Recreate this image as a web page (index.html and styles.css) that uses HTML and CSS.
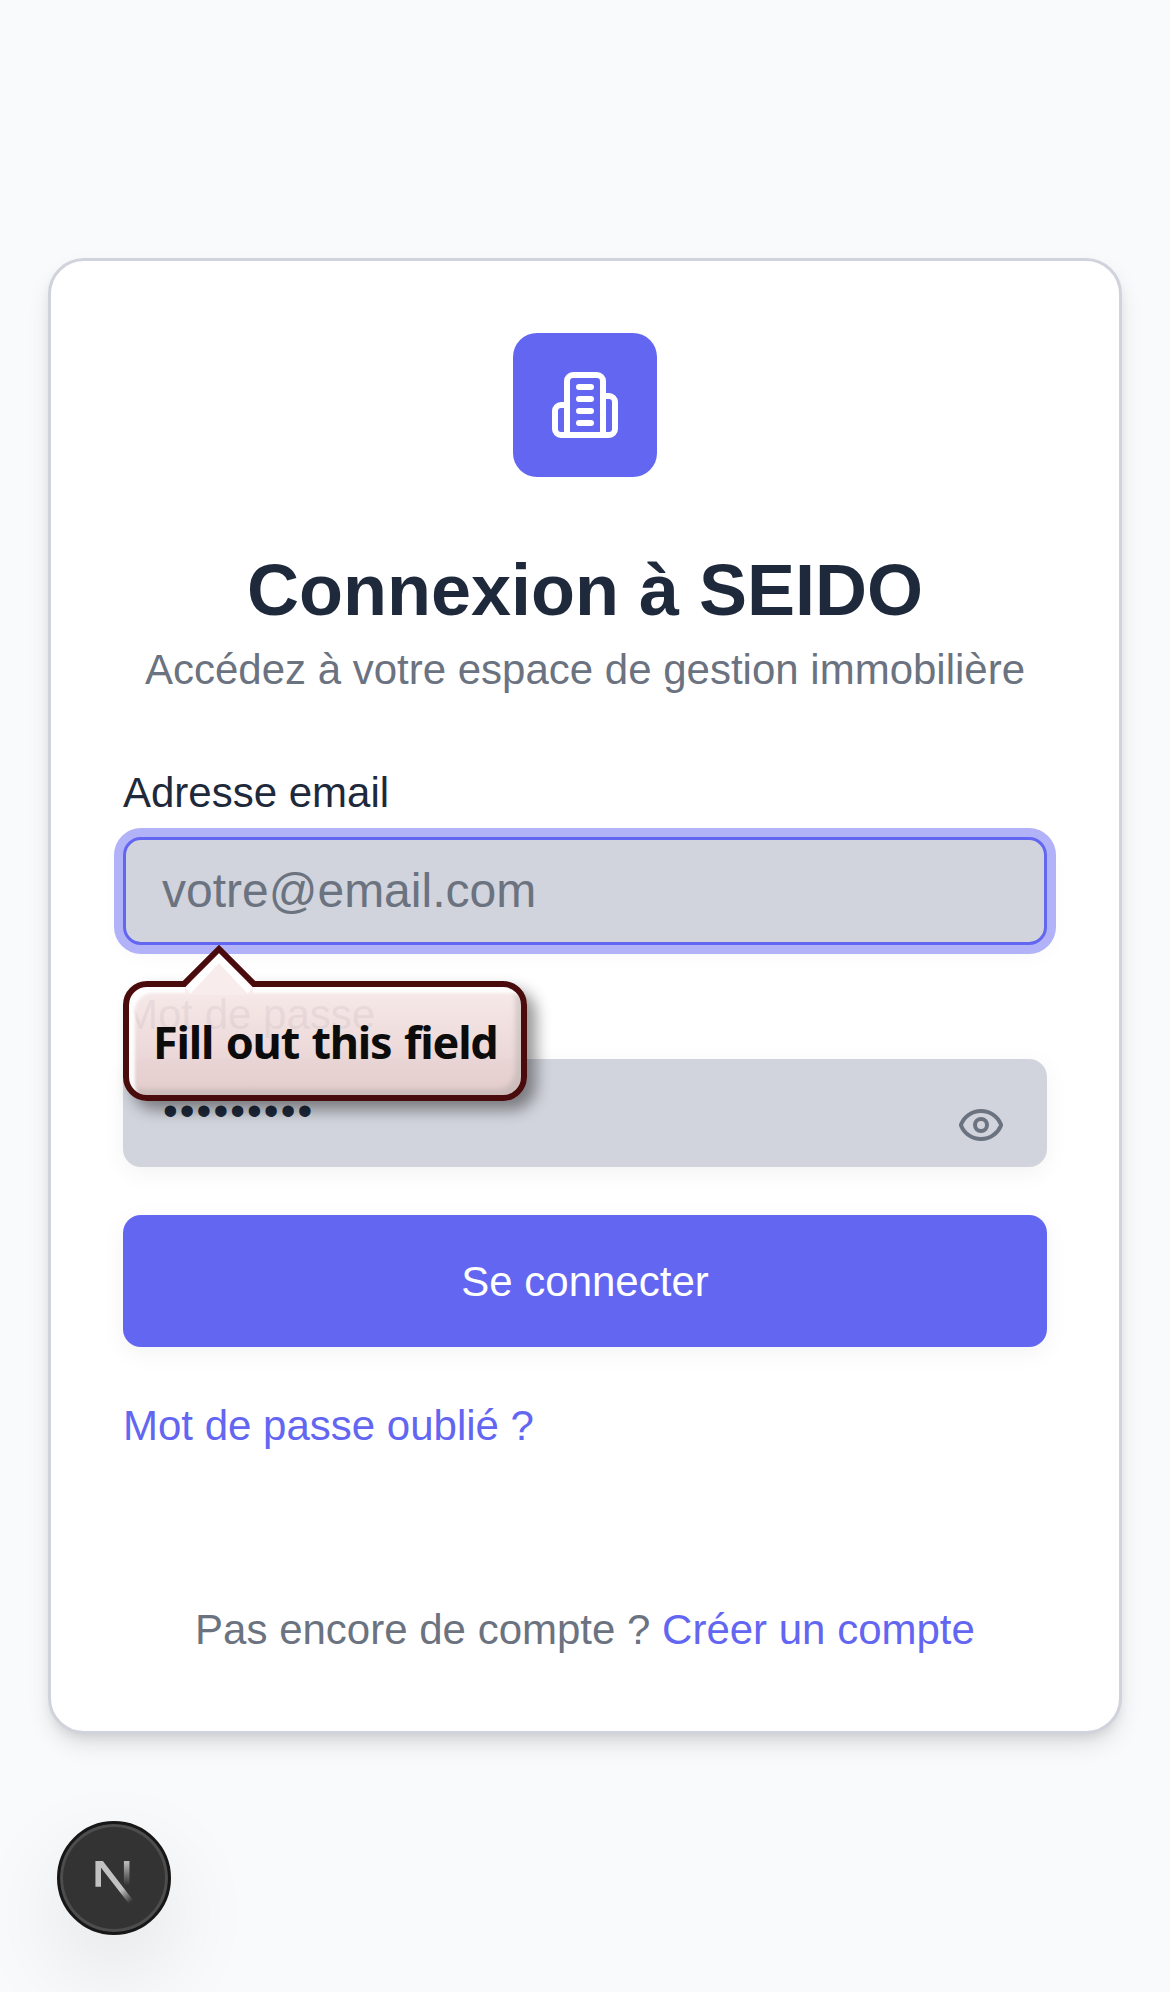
FILE: index.html
```html
<!DOCTYPE html>
<html lang="fr">
<head>
<meta charset="utf-8">
<title>Connexion à SEIDO</title>
<link rel="stylesheet" href="styles.css">
</head>
<body>
<main class="page">
  <section class="card">
    <header class="head">
      <div class="logo">
        <svg viewBox="0 0 24 24"><path d="M6 22V4a2 2 0 0 1 2-2h8a2 2 0 0 1 2 2v18Z"/><path d="M6 12H4a2 2 0 0 0-2 2v6a2 2 0 0 0 2 2h2"/><path d="M18 9h2a2 2 0 0 1 2 2v9a2 2 0 0 1-2 2h-2"/><path d="M10 6h4M10 10h4M10 14h4M10 18h4"/></svg>
      </div>
      <h1 class="title">Connexion à SEIDO</h1>
      <p class="subtitle">Accédez à votre espace de gestion immobilière</p>
    </header>
    <form class="form">
      <div class="field">
        <label class="label" for="email">Adresse email</label>
        <div class="control">
          <input class="input input-focused" id="email" type="text" placeholder="votre@email.com">
          <div class="tooltip">
            <svg class="tooltip-arrow" viewBox="0 0 76 50"><path class="arrow-fill" d="M4 42L38 6l34 36v8H4Z"/><path class="arrow-glow" d="M7 46L38 13l31 33"/><path class="arrow-line" d="M2 40L38 4l36 36"/></svg>
            <span class="tooltip-text">Fill out this field</span>
          </div>
        </div>
      </div>
      <div class="field">
        <label class="label" for="password">Mot de passe</label>
        <div class="control">
          <input class="input input-password" id="password" type="password" value="motdepass">
          <svg class="eye" viewBox="0 0 24 24"><path d="M2.062 12.348a1 1 0 0 1 0-.696 10.75 10.75 0 0 1 19.876 0 1 1 0 0 1 0 .696 10.75 10.75 0 0 1-19.876 0"/><circle cx="12" cy="12" r="3"/></svg>
        </div>
      </div>
      <button class="submit" type="button">Se connecter</button>
    </form>
    <a class="link forgot">Mot de passe oublié ?</a>
    <p class="signup">Pas encore de compte ? <a class="link">Créer un compte</a></p>
  </section>
</main>
<div class="dev-badge">
  <svg viewBox="0 0 38 38">
    <defs>
      <linearGradient id="diag" gradientUnits="userSpaceOnUse" x1="9.96" y1="11.12" x2="15.48" y2="17.97"><stop stop-color="#fff"/><stop offset=".6" stop-color="#fff" stop-opacity="0"/></linearGradient>
      <linearGradient id="stem" gradientUnits="userSpaceOnUse" x1="11.82" y1="1.4" x2="11.79" y2="9.63"><stop stop-color="#fff"/><stop offset="1" stop-color="#fff" stop-opacity="0"/></linearGradient>
      <clipPath id="cut"><path d="M0 1.5h20v20H0Z"/></clipPath>
    </defs>
    <g transform="translate(11.4 11.85)" fill="none" stroke-width="1.86" opacity=".7">
      <path d="M13.3 15.2L2.34 1v9.1" stroke="url(#diag)" clip-path="url(#cut)"/>
      <path d="M11.825 1.5v8.6" stroke="url(#stem)"/>
    </g>
  </svg>
</div>
</body>
</html>
```
FILE: styles.css
```css
* { box-sizing: border-box; }

body {
  margin: 0;
  background: #f9fafc;
  color: #1e293b;
  font-family: "Liberation Sans", Arial, sans-serif;
  font-size: 42px;
  line-height: 60px;
}

.page {
  display: flex;
  align-items: center;
  justify-content: center;
  height: 1992px;
  padding: 48px;
}

.card {
  width: 100%;
  height: 1476px;
  padding: 72px;
  background: #fff;
  border: 3px solid #d1d3dc;
  border-radius: 36px;
  box-shadow: 0 12px 24px -3px rgba(0, 0, 0, .12), 0 6px 12px -4px rgba(0, 0, 0, .1);
}

.head {
  display: flex;
  flex-direction: column;
  align-items: center;
}

.logo {
  display: grid;
  place-items: center;
  width: 144px;
  height: 144px;
  border-radius: 24px;
  background: #6366f1;
}

.logo svg { width: 72px; height: 72px; }

.logo svg,
.eye {
  fill: none;
  stroke: #fff;
  stroke-width: 2;
  stroke-linecap: round;
  stroke-linejoin: round;
}

.title {
  margin: 65px 0 0;
  font-size: 72px;
  font-weight: 700;
  line-height: 96px;
  white-space: nowrap;
}

.subtitle {
  margin: 2px 0 0;
  color: #6b7280;
  white-space: nowrap;
}

.form { margin-top: 72px; }

.field + .field { margin-top: 49px; }

.label {
  display: block;
  height: 42px;
  margin-bottom: 23px;
  line-height: 42px;
}

.control { position: relative; }

.input {
  display: block;
  width: 100%;
  height: 108px;
  padding: 0 36px 1px;
  border: 3px solid transparent;
  border-radius: 18px;
  outline: none;
  background: #d1d4dc;
  color: #1e293b;
  font: 48px "Liberation Sans", Arial, sans-serif;
  box-shadow: 0 6px 24px rgba(0, 0, 0, .05);
}

.input::placeholder { color: #6b7280; opacity: 1; }

.input-focused {
  border-color: #6366f1;
  box-shadow: 0 0 0 9px #b1b2f8, 0 6px 24px rgba(0, 0, 0, .05);
}

.input-password {
  padding: 0 37px 5px;
  border-color: #d1d4dc;
  font-size: 42px;
  letter-spacing: 2.1px;
}

.eye {
  position: absolute;
  top: 42px;
  right: 42px;
  width: 48px;
  height: 48px;
  stroke: #6b7280;
}

.tooltip {
  position: absolute;
  z-index: 2;
  top: 144px;
  left: 0;
  width: 404px;
  height: 120px;
  border: 6px solid #4a0b0d;
  border-radius: 24px;
  background: linear-gradient(rgba(247, 233, 233, .94), rgba(228, 203, 203, .96));
  box-shadow: 9px 9px 15px rgba(0, 0, 0, .42), inset 6px 6px 3px rgba(255, 255, 255, .9), inset -6px -6px 4px rgba(160, 160, 155, .35);
}

.tooltip-arrow {
  position: absolute;
  top: -42px;
  left: 52px;
  width: 76px;
  height: 50px;
  fill: none;
}

.arrow-fill { fill: #f8ecec; }
.arrow-glow { stroke: #fff; stroke-width: 7; }
.arrow-line { stroke: #4a0b0d; stroke-width: 6; }

.tooltip-text {
  position: absolute;
  top: 25px;
  left: 24px;
  color: #0c0c0c;
  font: 700 45px/60px "Noto Sans", "Open Sans", sans-serif;
  letter-spacing: -1.2px;
  word-spacing: 2px;
  white-space: nowrap;
}

.submit {
  display: block;
  width: 100%;
  height: 132px;
  margin-top: 48px;
  padding: 2px 0 0;
  border: 0;
  border-radius: 18px;
  background: #6366f1;
  color: #fff;
  font: 42px "Liberation Sans", Arial, sans-serif;
  box-shadow: 0 6px 24px rgba(0, 0, 0, .05);
}

.link { color: #6366f1; }

.forgot {
  display: block;
  margin-top: 49px;
}

.signup {
  margin: 144px 0 0;
  color: #6b7280;
  text-align: center;
}

.dev-badge {
  position: fixed;
  left: 57px;
  bottom: 57px;
  width: 114px;
  height: 114px;
  border: 3px solid #171717;
  border-radius: 50%;
  background: #333;
  box-shadow: inset 0 0 0 3px #4d4d4d, 0 36px 96px -6px rgba(0, 0, 0, .12);
}

.dev-badge svg {
  display: block;
  width: 114px;
  height: 114px;
  margin: -3px;
}
```
